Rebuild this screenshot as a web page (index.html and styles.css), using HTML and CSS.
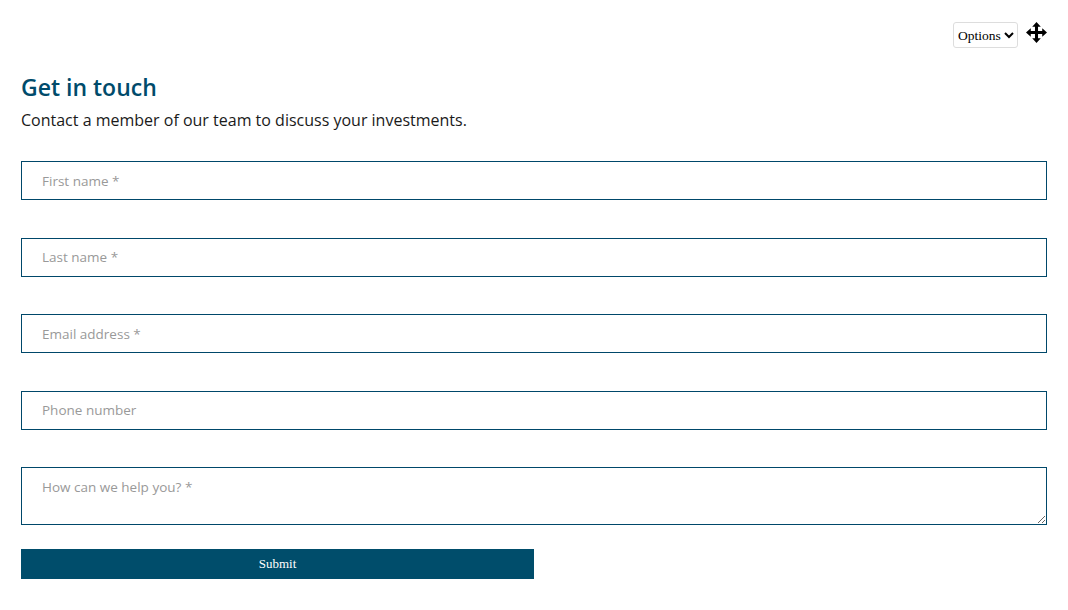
FILE: index.html
```html
<!DOCTYPE html>
<html>
<head>
<meta charset="utf-8">
<link rel="stylesheet" href="styles.css">
</head>
<body>
<div class="page">
  <div class="toolbar">
    <select class="options"><option>Options</option></select>
    <svg class="move" width="21" height="21" viewBox="0 0 22 22">
      <path d="M11 0 L15.5 5 H12.6 V9.4 H17 V6.5 L22 11 L17 15.5 V12.6 H12.6 V17 H15.5 L11 22 L6.5 17 H9.4 V12.6 H5 V15.5 L0 11 L5 6.5 V9.4 H9.4 V5 H6.5 Z" fill="#000"/>
    </svg>
  </div>
  <h1 class="title">Get in touch</h1>
  <p class="lead">Contact a member of our team to discuss your investments.</p>
  <form class="form">
    <input class="field" type="text" placeholder="First name *">
    <input class="field" type="text" placeholder="Last name *">
    <input class="field" type="text" placeholder="Email address *">
    <input class="field" type="text" placeholder="Phone number">
    <textarea class="field area" placeholder="How can we help you? *"></textarea>
    <button class="submit" type="button">Submit</button>
  </form>
</div>
</body>
</html>
```

FILE: styles.css
```css
html, body {
  margin: 0;
  padding: 0;
  background: #fff;
}
.page {
  padding: 22px 21px 0 21px;
  font-family: "Open Sans", "Noto Sans", sans-serif;
}
.toolbar {
  display: flex;
  justify-content: flex-end;
  align-items: flex-start;
  gap: 8px;
  height: 26px;
}
.options {
  font-family: "Liberation Serif", serif;
  font-size: 13.5px;
  height: 26px;
  padding: 0;
  border: 1px solid #ddd;
  border-radius: 3px;
  background: #fff;
  color: #000;
}
.move {
  display: block;
  margin-top: 0;
}
.title {
  margin: 24px 0 0 0;
  font-size: 23px;
  line-height: 30px;
  font-weight: 600;
  color: #004b6b;
}
.lead {
  margin: 6px 0 0 0;
  font-size: 16px;
  line-height: 24px;
  color: #1a1a1a;
}
.form {
  display: flex;
  flex-direction: column;
  align-items: flex-start;
  gap: 37.5px;
  margin-top: 29px;
}
.field {
  box-sizing: border-box;
  width: 100%;
  height: 39px;
  margin: 0;
  padding: 0 20px;
  border: 1px solid #00486a;
  border-radius: 0;
  font-family: "Open Sans", "Noto Sans", sans-serif;
  font-size: 13.5px;
  color: #333;
  outline: none;
}
.field::placeholder {
  color: #999;
}
.area {
  height: 58px;
  padding-top: 10px;
  resize: vertical;
  display: block;
}
.form .submit {
  margin-top: -13.5px;
  width: 513px;
  height: 30px;
  border: none;
  background: #004d6b;
  color: #fff;
  font-family: "Liberation Serif", serif;
  font-size: 13px;
}
```
